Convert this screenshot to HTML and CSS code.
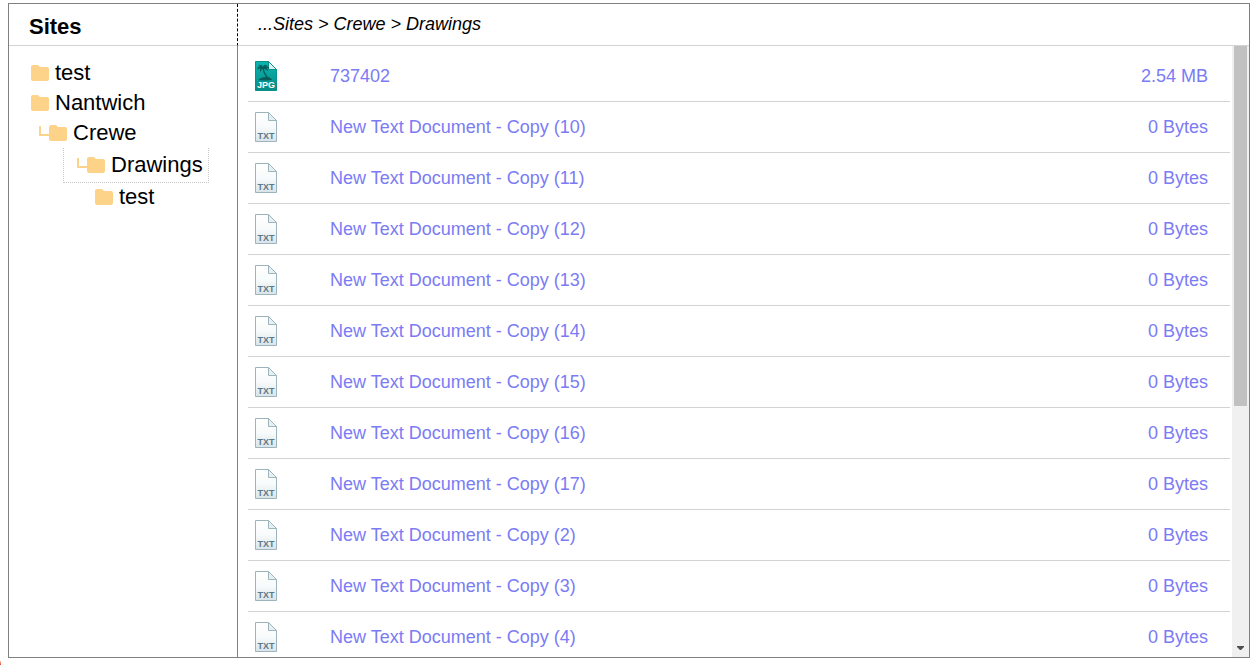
FILE: index.html
```
<!DOCTYPE html>
<html lang="en">
<head>
<meta charset="utf-8">
<title>Sites</title>
<link rel="stylesheet" href="styles.css">
</head>
<body>
<svg class="defs" aria-hidden="true">
  <defs>
    <linearGradient id="paper" x1="0" y1="0" x2="0" y2="1"><stop offset="0" stop-color="#ffffff"/><stop offset=".5" stop-color="#f8fbfb"/><stop offset="1" stop-color="#d9e3e7"/></linearGradient>
    <linearGradient id="teal" x1="0" y1="0" x2="0" y2="1"><stop offset="0" stop-color="#0ab5b0"/><stop offset="1" stop-color="#078c87"/></linearGradient>
  </defs>
  <symbol id="folder" viewBox="0 0 18 16"><path fill="#fdd38a" d="M2 0h5l2 2h7a2 2 0 0 1 2 2v10a2 2 0 0 1-2 2H2a2 2 0 0 1-2-2V2a2 2 0 0 1 2-2z"/></symbol>
  <symbol id="branch" viewBox="0 0 10 16"><path fill="none" stroke="#fdd38a" stroke-width="2" d="M1 1v9h9"/></symbol>
  <symbol id="txt" viewBox="0 0 24 30">
    <path fill="url(#paper)" stroke="#9db4bd" d="M1.5.5h13l8 8v21h-21z"/>
    <path fill="#e6eff2" stroke="#9db4bd" d="M14.5.5v8h8z"/>
  </symbol>
  <symbol id="jpg" viewBox="0 0 24 30">
    <path fill="url(#teal)" stroke="#07908c" d="M1.5.5h13l8 8v21h-21z"/>
    <path fill="#d4f2f0" stroke="#07908c" d="M14.5.5v8h8z"/>
    <path fill="#085c5a" d="M9 6C8 3.500 5.500 3 4 4.500c1.500-.3 2 .2 2.500.8C4 5.200 3 7 3.500 9c.8-1.200 1.800-1.700 3-1.800-.8 1-.9 2.800 0 4 .2-1.500.9-2.600 2-3.400.2 3.200 2 5.700 3.500 8.200-3 0-6 1-8 3 4 .6 10 .6 14 0-1-1.700-2.500-2.600-4.200-2.900C12.400 13.500 10.500 11 10 8c1.800-.2 3 .9 3.500 2.500.7-1.500.2-2.800-1-3.500 1.200-.2 2 .3 2.800 1-.1-2-1.800-3-3.800-2.500.5-.7 1-1 2-1C12 3 9.800 3.500 9 6z"/>
  </symbol>
</svg>
<div class="explorer">
  <header class="head head-side"><h1 class="title">Sites</h1></header>
  <header class="head head-main"><p class="crumbs">...Sites &gt; Crewe &gt; Drawings</p></header>
  <nav class="tree" aria-label="Folders">
    <button class="node"><svg class="folder"><use href="#folder"/></svg>test</button>
    <button class="node"><svg class="folder"><use href="#folder"/></svg>Nantwich</button>
    <button class="node level-1"><svg class="branch"><use href="#branch"/></svg><svg class="folder"><use href="#folder"/></svg>Crewe</button>
    <button class="node level-2 selected"><svg class="branch"><use href="#branch"/></svg><svg class="folder"><use href="#folder"/></svg>Drawings</button>
    <button class="node level-3"><svg class="folder"><use href="#folder"/></svg>test</button>
  </nav>
  <main class="content">
    <ul class="files">
      <li class="file"><span class="icon"><svg class="sheet"><use href="#jpg"/></svg><span class="tag tag-jpg">JPG</span></span><a class="name" href="#">737402</a><span class="size">2.54 MB</span></li>
      <li class="file"><span class="icon"><svg class="sheet"><use href="#txt"/></svg><span class="tag">TXT</span></span><a class="name" href="#">New Text Document - Copy (10)</a><span class="size">0 Bytes</span></li>
      <li class="file"><span class="icon"><svg class="sheet"><use href="#txt"/></svg><span class="tag">TXT</span></span><a class="name" href="#">New Text Document - Copy (11)</a><span class="size">0 Bytes</span></li>
      <li class="file"><span class="icon"><svg class="sheet"><use href="#txt"/></svg><span class="tag">TXT</span></span><a class="name" href="#">New Text Document - Copy (12)</a><span class="size">0 Bytes</span></li>
      <li class="file"><span class="icon"><svg class="sheet"><use href="#txt"/></svg><span class="tag">TXT</span></span><a class="name" href="#">New Text Document - Copy (13)</a><span class="size">0 Bytes</span></li>
      <li class="file"><span class="icon"><svg class="sheet"><use href="#txt"/></svg><span class="tag">TXT</span></span><a class="name" href="#">New Text Document - Copy (14)</a><span class="size">0 Bytes</span></li>
      <li class="file"><span class="icon"><svg class="sheet"><use href="#txt"/></svg><span class="tag">TXT</span></span><a class="name" href="#">New Text Document - Copy (15)</a><span class="size">0 Bytes</span></li>
      <li class="file"><span class="icon"><svg class="sheet"><use href="#txt"/></svg><span class="tag">TXT</span></span><a class="name" href="#">New Text Document - Copy (16)</a><span class="size">0 Bytes</span></li>
      <li class="file"><span class="icon"><svg class="sheet"><use href="#txt"/></svg><span class="tag">TXT</span></span><a class="name" href="#">New Text Document - Copy (17)</a><span class="size">0 Bytes</span></li>
      <li class="file"><span class="icon"><svg class="sheet"><use href="#txt"/></svg><span class="tag">TXT</span></span><a class="name" href="#">New Text Document - Copy (2)</a><span class="size">0 Bytes</span></li>
      <li class="file"><span class="icon"><svg class="sheet"><use href="#txt"/></svg><span class="tag">TXT</span></span><a class="name" href="#">New Text Document - Copy (3)</a><span class="size">0 Bytes</span></li>
      <li class="file"><span class="icon"><svg class="sheet"><use href="#txt"/></svg><span class="tag">TXT</span></span><a class="name" href="#">New Text Document - Copy (4)</a><span class="size">0 Bytes</span></li>
    </ul>
    <div class="scrollbar" aria-hidden="true">
      <div class="track"><div class="thumb"></div></div>
      <svg class="arrow" viewBox="0 0 7 4"><path fill="#505050" d="M0 0h7v1L4 4H3L0 1z"/></svg>
    </div>
  </main>
</div>
<span class="edge-mark"></span>
</body>
</html>
```
FILE: styles.css
```
* { box-sizing: border-box; }
body {
  margin: 0;
  padding: 3px 7px 7px 8px;
  height: 100vh;
  background: #fff;
  color: #000;
  font-family: "Liberation Sans", Arial, sans-serif;
  overflow: hidden;
}
.defs { position: absolute; width: 0; height: 0; }
.explorer {
  display: grid;
  grid-template-columns: 229px minmax(0, 1fr);
  grid-template-rows: 42px minmax(0, 1fr);
  height: 100%;
  border: 1px solid #808080;
}
.head {
  display: flex;
  align-items: center;
  padding: 0 20px;
  border-bottom: 1px solid #d3d3d3;
}
.head-side { border-right: 1px dashed #000; padding-top: 4px; }
.head-main { padding-bottom: 2px; }
.title { margin: 0; font-size: 22px; line-height: 26px; }
.crumbs { margin: 0; font-size: 18px; line-height: 22px; font-style: italic; }
.tree {
  display: flex;
  flex-direction: column;
  align-items: flex-start;
  padding: 12px 20px;
  border-right: 1px solid #808080;
}
.node {
  display: flex;
  align-items: center;
  height: 30px;
  padding: 0 2px;
  border: 0;
  background: none;
  color: inherit;
  font-family: inherit;
  font-size: 22px;
  line-height: 30px;
  white-space: nowrap;
}
.level-1 { margin-left: 8px; }
.level-2 { margin-left: 34px; }
.level-3 { margin-left: 64px; }
.selected {
  height: 35px;
  margin-bottom: -1px;
  padding: 0 5px 0 13px;
  border: 1px dotted #c8c8c8;
  border-top: 0;
}
.folder { width: 18px; height: 16px; margin-right: 6px; }
.branch { width: 10px; height: 16px; }
.content { display: flex; overflow: hidden; }
.files {
  flex: 1;
  margin: 0;
  padding: 5px 2px 0 10px;
  list-style: none;
}
.file {
  display: flex;
  align-items: center;
  height: 51px;
  padding: 0 22px 0 6px;
  border-bottom: 1px solid #d3d3d3;
  color: #7b7bf5;
  font-size: 18px;
  line-height: 22px;
}
.icon { position: relative; width: 24px; height: 30px; margin-right: 52px; }
.sheet { display: block; width: 24px; height: 30px; }
.tag {
  position: absolute;
  left: 0;
  right: 0;
  bottom: 1px;
  color: #5f7885;
  font-size: 9px;
  font-weight: bold;
  line-height: 10px;
  text-align: center;
}
.tag-jpg { color: #fff; }
.name { flex: 1; color: inherit; text-decoration: none; }
.scrollbar {
  display: flex;
  flex-direction: column;
  align-items: center;
  width: 17px;
  padding-bottom: 7px;
  background: #f0f0f0;
}
.track { flex: 1; width: 13px; }
.thumb { height: 60%; background: #c1c1c1; }
.arrow { width: 7px; height: 4px; }
.edge-mark {
  position: absolute;
  left: 0;
  bottom: 0;
  width: 1px;
  height: 4px;
  background: linear-gradient(#f9c9bd, #e8441c);
}
```
